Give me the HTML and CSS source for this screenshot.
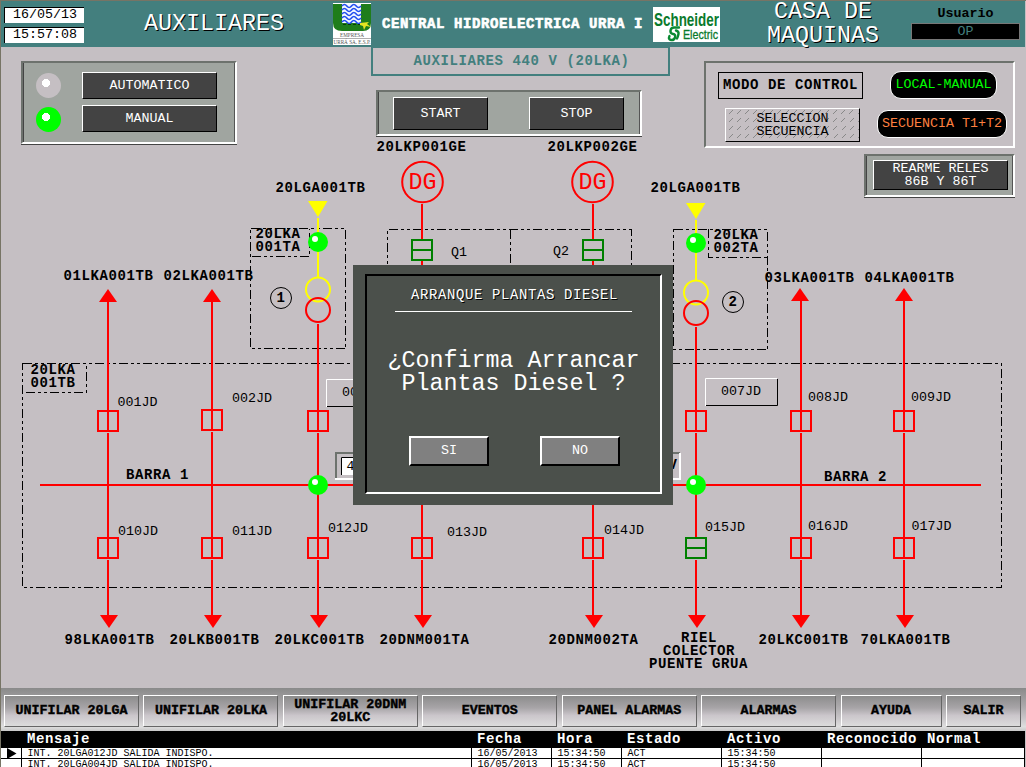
FILE: index.html
```html
<!DOCTYPE html>
<html lang="es">
<head>
<meta charset="utf-8">
<title>Auxiliares 440 V</title>
<link rel="stylesheet" href="styles.css">
</head>
<body>
<div class="screen">
  <header class="topbar">
    <div class="clock">
      <div class="clock-box">16/05/13</div>
      <div class="clock-box">15:57:08</div>
    </div>
    <div class="big title-left">AUXILIARES</div>
    <svg class="logo-urra" width="38" height="42" viewBox="0 0 38 42">
      <rect width="38" height="42" fill="#fff"/>
      <path d="M0 1H38V20Q38 28 30 28H9Q0 28 0 20Z" fill="#1f7d1b"/>
      <rect x="9" y="1" width="19" height="19" fill="#f4f8ff"/>
      <g fill="none" stroke="#2450f0" stroke-width="1.7">
        <path id="wave" d="M9 3q2.4-3 4.8 0t4.7 0t4.7 0t4.8 0"/>
        <use href="#wave" y="4"/><use href="#wave" y="8"/><use href="#wave" y="12"/><use href="#wave" y="16"/>
      </g>
      <path d="M10 21.5H28" stroke="#0b3c0b" stroke-dasharray="3 2"/>
      <path d="M27 20l9-1-2 2 4 3-5-1-2 4-1-4-3-1z" fill="#e4e422"/>
      <text class="urra-text" x="7" y="34" textLength="24" lengthAdjust="spacingAndGlyphs">EMPRESA</text>
      <path d="M0 35.500H38" stroke="#999" stroke-width=".8"/>
      <text class="urra-text" x="0.500" y="40.700" textLength="37" lengthAdjust="spacingAndGlyphs">URRÁ SA. E.S.P.</text>
    </svg>
    <div class="plant">CENTRAL HIDROELECTRICA URRA I</div>
    <svg class="logo-schneider" width="67" height="35" viewBox="0 0 67 35">
      <rect width="67" height="35" fill="#fff"/>
      <text class="sch-name" x="1" y="18.500" textLength="65" lengthAdjust="spacingAndGlyphs">Schneider</text>
      <text class="sch-elec" x="30" y="31.500" textLength="35" lengthAdjust="spacingAndGlyphs">Electric</text>
      <g fill="none" stroke="#0a8a32" stroke-width="2.4" stroke-linecap="round">
        <path d="M26 20.500H21q-3 0-3.500 3t2.500 3.500q3 .5 2 3.500t-4 2.500q-3-.5-1.500-4"/>
        <path d="M23 23.500q3 1 2.500 3.500t-1.500 4.500"/>
      </g>
    </svg>
    <div class="big title-right">CASA DE<br>MAQUINAS</div>
    <div class="user">
      <div class="user-label">Usuario</div>
      <div class="user-box">OP</div>
    </div>
  </header>

  <main class="mimic">
    <svg class="diagram" width="1025" height="641" viewBox="1 47 1025 641">
      <defs>
        <g id="brk"><rect x="-10" y="-10" width="20" height="20"/></g>
        <g id="brk-open"><rect x="-10" y="-10" width="20" height="20"/><path d="M-10 0H10"/></g>
        <g id="ball"><circle r="10" fill="#0f0"/><circle cx="-3" cy="-3" r="3" fill="#fff"/></g>
        <path id="up" d="M0 0L9 13H-9Z"/>
        <path id="down" d="M0 13L9 0H-9Z"/>
      </defs>

      <g class="dash">
        <path d="M22.500 363.500H1001.500V587.500H22.500Z"/>
        <path d="M26 392.500H86.500V364"/>
        <path d="M250.500 228.500H345.500V348.500H250.500Z"/>
        <path d="M252 256.500H309.500V229"/>
        <path d="M673.500 229.500H767.500V349.500H673.500Z"/>
        <path d="M708.500 229V257.500H767"/>
        <path d="M387.500 300V229.500H631.500V300M510.500 230V300"/>
      </g>

      <g class="red-line">
        <path d="M40 485H981"/>
        <path d="M108 301V432M108 433V559M108 560V616"/>
        <path d="M212 301V431M212 432V559M212 560V616"/>
        <path d="M318 324V432M318 433V559M318 560V616"/>
        <path d="M422 204V240M422 261V559M422 560V616"/>
        <path d="M593 204V240M593 261V559M593 560V616"/>
        <path d="M696 327V432M696 433V537M696 560V616"/>
        <path d="M801 300V432M801 433V559M801 560V616"/>
        <path d="M904 300V432M904 433V559M904 560V616"/>
        <use href="#brk" x="108" y="421"/><use href="#brk" x="212" y="420"/><use href="#brk" x="318" y="421"/>
        <use href="#brk" x="696" y="421"/><use href="#brk" x="801" y="421"/><use href="#brk" x="904" y="421"/>
        <use href="#brk" x="108" y="548"/><use href="#brk" x="212" y="548"/><use href="#brk" x="318" y="548"/>
        <use href="#brk" x="422" y="548"/><use href="#brk" x="593" y="548"/><use href="#brk" x="801" y="548"/>
        <use href="#brk" x="904" y="548"/>
        <circle cx="422.500" cy="182" r="20.300"/><circle cx="592.500" cy="182" r="20.300"/>
      </g>
      <g class="green-line">
        <use href="#brk-open" x="422" y="250"/><use href="#brk-open" x="593" y="250"/><use href="#brk-open" x="696" y="548"/>
      </g>
      <g class="yellow-line">
        <path d="M318 218V278M696 220V281"/>
        <circle cx="318" cy="289.500" r="12"/><circle cx="696" cy="292.500" r="12"/>
      </g>
      <g class="red-line"><circle cx="318" cy="310" r="12"/><circle cx="696" cy="313" r="12"/></g>
      <path d="M308 201H327.500L318 217ZM686 203H705.500L696 219Z" fill="#ff0"/>
      <g fill="#f00">
        <use href="#up" x="108" y="289"/><use href="#up" x="212" y="289"/><use href="#up" x="800" y="288"/><use href="#up" x="904" y="288"/>
        <use href="#down" x="109" y="615"/><use href="#down" x="213" y="615"/><use href="#down" x="319" y="615"/><use href="#down" x="423" y="615"/>
        <use href="#down" x="594" y="615"/><use href="#down" x="697" y="615"/><use href="#down" x="801" y="615"/><use href="#down" x="905" y="615"/>
      </g>
      <use href="#ball" x="318" y="242"/><use href="#ball" x="696" y="243"/>
      <use href="#ball" x="318" y="485"/><use href="#ball" x="696" y="485"/>
      <g fill="none" stroke="#000"><circle cx="281" cy="298" r="10.500"/><circle cx="733" cy="302" r="10.500"/></g>

      <g class="dg"><text x="408.500" y="189">DG</text><text x="578.500" y="189">DG</text></g>

      <g class="tag">
        <text x="376.500" y="151">20LKP001GE</text><text x="547.500" y="151">20LKP002GE</text>
        <text x="275.500" y="192">20LGA001TB</text><text x="650.500" y="192">20LGA001TB</text>
        <text x="255.500" y="238">20LKA</text><text x="255.500" y="251">001TA</text>
        <text x="713.500" y="239">20LKA</text><text x="713.500" y="252">002TA</text>
        <text x="63.500" y="280">01LKA001TB</text><text x="163.500" y="280">02LKA001TB</text>
        <text x="764.500" y="282">03LKA001TB</text><text x="864.500" y="282">04LKA001TB</text>
        <text x="30.500" y="374">20LKA</text><text x="30.500" y="387">001TB</text>
        <text x="126" y="479">BARRA 1</text><text x="824" y="481">BARRA 2</text>
        <text x="64.500" y="644">98LKA001TB</text><text x="169.500" y="644">20LKB001TB</text>
        <text x="274.500" y="644">20LKC001TB</text><text x="379.500" y="644">20DNM001TA</text>
        <text x="548.500" y="644">20DNM002TA</text>
        <text x="681" y="642">RIEL</text><text x="663" y="655">COLECTOR</text><text x="649" y="668">PUENTE GRUA</text>
        <text x="758.500" y="644">20LKC001TB</text><text x="860.500" y="644">70LKA001TB</text>
        <text x="276.500" y="302">1</text><text x="728.500" y="306">2</text>
      </g>

      <path d="M326.500 407V379.500H400" stroke="#fff" fill="none"/><path d="M327 406.500H400" stroke="#000"/>
      <path d="M705.500 406V378.500H777" stroke="#fff" fill="none"/><path d="M706 405.500H777.500V379" stroke="#000" fill="none"/>
      <g fill="none" stroke-width="2">
        <path d="M336 479V453H680" stroke="#6d726d"/>
        <path d="M335 479H680V453" stroke="#fff"/>
      </g>
      <rect x="341" y="457" width="60" height="18" fill="#fff"/>
      <path d="M341.500 475V457.500H400" stroke="#000" fill="none"/>

      <g class="jd">
        <text x="117.500" y="406">001JD</text><text x="232" y="402">002JD</text><text x="342" y="396">003JD</text>
        <text x="721" y="395">007JD</text><text x="808" y="401">008JD</text><text x="911" y="401">009JD</text>
        <text x="118" y="535">010JD</text><text x="232" y="535">011JD</text><text x="328" y="532">012JD</text>
        <text x="447" y="536">013JD</text><text x="604" y="534">014JD</text><text x="705" y="531">015JD</text>
        <text x="808" y="530">016JD</text><text x="911.500" y="530">017JD</text>
        <text x="451" y="256">Q1</text><text x="553" y="255">Q2</text>
        <text x="346.500" y="470">440</text>
      </g>
      <g class="tag"><text x="668.500" y="469">V</text></g>
    </svg>

    <section class="panel mode">
      <div class="mode-row"><i class="lamp"></i><button class="key">AUTOMATICO</button></div>
      <div class="mode-row"><i class="lamp on"></i><button class="key">MANUAL</button></div>
    </section>

    <div class="center">
      <h1 class="subtitle">AUXILIARES 440 V (20LKA)</h1>
      <section class="panel run">
        <button class="key">START</button>
        <button class="key">STOP</button>
      </section>
    </div>

    <div class="right">
      <section class="control">
        <div class="control-label">MODO DE CONTROL</div>
        <div class="pill local">LOCAL-MANUAL</div>
        <button class="hatched"><span>SELECCION<br>SECUENCIA</span></button>
        <div class="pill seq">SECUENCIA T1+T2</div>
      </section>
      <section class="panel reset"><button class="key">REARME RELES<br>86B Y 86T</button></section>
    </div>

    <div class="dialog">
      <div class="dialog-frame">
        <h2 class="dialog-title">ARRANQUE PLANTAS DIESEL</h2>
        <p class="dialog-msg">¿Confirma Arrancar<br>Plantas Diesel ?</p>
        <div class="dialog-actions"><button class="answer">SI</button><button class="answer">NO</button></div>
      </div>
    </div>
  </main>

  <nav class="menu">
    <button class="tab">UNIFILAR 20LGA</button>
    <button class="tab">UNIFILAR 20LKA</button>
    <button class="tab">UNIFILAR 20DNM<br>20LKC</button>
    <button class="tab">EVENTOS</button>
    <button class="tab">PANEL ALARMAS</button>
    <button class="tab">ALARMAS</button>
    <button class="tab ayuda">AYUDA</button>
    <button class="tab salir">SALIR</button>
  </nav>

  <div class="alarms">
    <div class="row head"><b></b><b>Mensaje</b><b>Fecha</b><b>Hora</b><b>Estado</b><b>Activo</b><b>Reconocido</b><b>Normal</b></div>
    <div class="row"><span><svg class="marker" width="10" height="11" viewBox="0 0 10 11"><path d="M0 0L9.500 5.500L0 11Z"/></svg></span><span>INT. 20LGA012JD SALIDA INDISPO.</span><span>16/05/2013</span><span>15:34:50</span><span>ACT</span><span>15:34:50</span><span></span><span></span></div>
    <div class="row"><span></span><span>INT. 20LGA004JD SALIDA INDISPO.</span><span>16/05/2013</span><span>15:34:50</span><span>ACT</span><span>15:34:50</span><span></span><span></span></div>
  </div>
</div>
</body>
</html>
```
FILE: styles.css
```css
* { box-sizing: border-box; margin: 0; padding: 0; }
body {
  width: 1026px; height: 767px; overflow: hidden; background: #c5bfc3;
  font-family: "Liberation Mono", monospace; font-size: 13.33px; color: #000;
}
button { font: inherit; letter-spacing: inherit; color: inherit; text-align: center; }
.screen {
  width: 1026px; height: 767px; overflow: hidden; display: flex; flex-direction: column;
  border-top: 1px solid #777465; border-left: 1px solid #777465;
}

/* top bar */
.topbar { height: 46px; flex: none; display: flex; align-items: flex-start; background: #437f7e; width: 1024px; }
.clock { width: 80px; margin: 6px 0 0 3px; display: flex; flex-direction: column; gap: 4px; }
.clock-box {
  height: 16px; line-height: 13px; text-align: center; background: #fff; padding-left: 1px;
  border-top: 1px solid #000; border-left: 1px solid #000;
}
.big { font-size: 23.33px; line-height: 23px; color: #fff; text-shadow: 1px 1px 0 #000; text-align: center; white-space: nowrap; }
.title-left { width: 142px; margin: 12px 0 0 59px; }
.logo-urra { margin: 2px 0 0 48px; flex: none; }
.urra-text { font: 5.500px "Liberation Serif", serif; fill: #555; }
.plant { width: 262px; margin: 14px 0 0 11px; font-size: 14px; font-weight: bold; letter-spacing: .6px; line-height: 18px; color: #fff; white-space: nowrap; -webkit-text-stroke: .6px #fff; }
.logo-schneider { margin: 6px 0 0 9px; flex: none; }
.sch-name { font: bold 19px "Liberation Sans", sans-serif; fill: #0a7a2c; }
.sch-elec { font: 13px "Liberation Sans", sans-serif; fill: #0a7a2c; stroke: #0a7a2c; stroke-width: .3px; }
.title-right { width: 120px; margin: -1px 0 0 43px; line-height: 24px; }
.user { width: 109px; margin: 4px 0 0 28px; text-align: center; }
.user-label { height: 18px; line-height: 17px; font-weight: bold; }
.user-box { height: 17px; line-height: 15px; background: #000; border: 1px solid #777; color: #437f7e; }

/* mimic area */
.mimic { position: relative; height: 641px; flex: none; display: flex; align-items: flex-start; }
.diagram { position: absolute; left: 0; top: 0; }
.panel {
  position: relative; background: #a0a5a0; border: 2px solid; border-color: #6d726d #fff #fff #6d726d;
  box-shadow: inset 1px 0 #444, inset -1px 0 #555, 0 1px #444;
}
.key {
  background: #434343; color: #fff; border: 1px solid; border-color: #fff #000 #000 #fff;
  width: 135px; height: 27px; line-height: 13px;
}
.mode { width: 216px; height: 83px; margin: 14px 0 0 20px; padding: 9px 0 0 13px; display: flex; flex-direction: column; gap: 6px; }
.mode-row { display: flex; align-items: center; gap: 21px; }
.lamp { width: 25px; height: 25px; border-radius: 50%; background: radial-gradient(circle 4px at 10px 10px, #fff 96%, transparent 100%) #c5bfc3; }
.lamp.on { background-color: #0f0; margin-top: 2px; }
.center { width: 299px; margin-left: 134px; position: relative; }
.subtitle {
  height: 29px; border: 2px solid #437f7e; border-top-width: 1px; text-align: center; font-size: 14px;
  line-height: 26px; letter-spacing: .6px; color: #437f7e; padding-left: 2px; white-space: nowrap;
}
.run { width: 266px; height: 46px; margin: 14px 0 0 5px; padding: 5px 16px 0 15px; display: flex; justify-content: space-between; }
.run .key { width: 95px; height: 33px; }
.right { position: relative; width: 311px; margin: 14px 0 0 34px; display: flex; flex-direction: column; align-items: flex-end; }
.control {
  width: 311px; height: 87px; border: 2px solid; border-color: #6d726d #fff #fff #6d726d;
  padding: 8px 6px 0 12px; display: grid; grid-template-columns: 145px 1fr; grid-template-rows: 28px 34px; row-gap: 8px;
}
.control-label { width: 145px; height: 27px; margin-top: 1px; border: 1px solid #000; font-size: 14px; font-weight: bold; letter-spacing: .6px; line-height: 25px; text-align: center; white-space: nowrap; }
.pill { height: 28px; background: #000; border: 1px solid #fff; border-radius: 11px; line-height: 26px; text-align: center; white-space: nowrap; justify-self: end; }
.local { width: 107px; color: #0f0; margin-right: 10px; }
.seq { width: 130px; color: #ff8040; margin-top: 3px; }
.hatched {
  width: 135px; height: 34px; margin: 1px 0 0 7px; line-height: 13px; border: 1px solid; border-color: #fff #000 #000 #fff;
  background: repeating-linear-gradient(#c5bfc3 0 1px, transparent 1px 5px, #c5bfc3 5px 8px),
    repeating-linear-gradient(135deg, transparent 0 5px, #888 5px 5.700px) #c5bfc3;
}
.reset { width: 151px; height: 43px; margin-top: 6px; padding: 4px 0 0 7px; }
.reset .key { height: 30px; }

/* diagram strokes and labels */
.dash { fill: none; stroke: #000; stroke-dasharray: 9 3 3 3 3 3; shape-rendering: crispEdges; }
.red-line, .green-line, .yellow-line { fill: none; stroke: #f00; stroke-width: 2; }
.green-line { stroke: #008000; }
.yellow-line { stroke: #ff0; }
.tag { font-size: 14px; font-weight: bold; letter-spacing: .6px; }
.dg { font-size: 23.33px; fill: #f00; }

/* confirmation dialog */
.dialog { position: absolute; left: 352px; top: 218px; width: 320px; height: 240px; background: #4b504b; color: #fff; padding: 9px 11px 11px 12px; }
.dialog-frame { height: 220px; border: 2px solid; border-color: #000 #fff #fff #000; padding: 11px 28px 0; }
.dialog-title { height: 25px; border-bottom: 1px solid #fff; font-size: 14px; font-weight: normal; letter-spacing: .6px; line-height: 17px; padding-left: 2px; text-shadow: 1px 1px 0 #000; text-align: center; white-space: nowrap; }
.dialog-msg { margin: 38px -20px 0; font-size: 23.33px; line-height: 23px; text-align: center; white-space: nowrap; }
.dialog-actions { display: flex; justify-content: space-between; margin: 40px 12px 0 14px; }
.answer { width: 80px; height: 30px; background: #808080; border: 2px solid; border-color: #fff #000 #000 #fff; line-height: 22px; padding-bottom: 1px; }

/* menu bar */
.menu {
  height: 43px; flex: none; width: 1025px; padding: 7px 5px 0 3px; display: flex; justify-content: space-between;
  background: linear-gradient(#8a8a8a, #a9a7a9 40%, #c8c5c8 70%, #dedede 90%, #c8c8c8);
}
.tab {
  width: 135px; height: 32px; font-weight: bold; line-height: 13px; white-space: nowrap;
  border: 1px solid; border-color: #fff #666 #666 #fff; padding-bottom: 1px;
  background: linear-gradient(#8c8c8c, #a8a5a8 40%, #cbc6cb 65%, #dcdcdc); -webkit-text-stroke: .4px #000;
}
.ayuda { width: 101px; }
.salir { width: 75px; }

/* alarm list */
.alarms { width: 1024px; }
.row { display: grid; grid-template-columns: 20px 450px 80px 70px 100px 100px 100px 104px; height: 11px; background: #fff; border-bottom: 1px solid #000; font-size: 10px; line-height: 11px; white-space: nowrap; overflow: hidden; }
.row span + span { border-left: 1px solid #000; padding-left: 5.500px; }
.row span:last-child { border-right: 1px solid #000; }
.head { height: 17px; background: #000; color: #fff; font-size: 14px; letter-spacing: .6px; line-height: 17px; }
.head b + b { padding-left: 6px; }
.marker { display: block; margin-left: 6px; }
```
